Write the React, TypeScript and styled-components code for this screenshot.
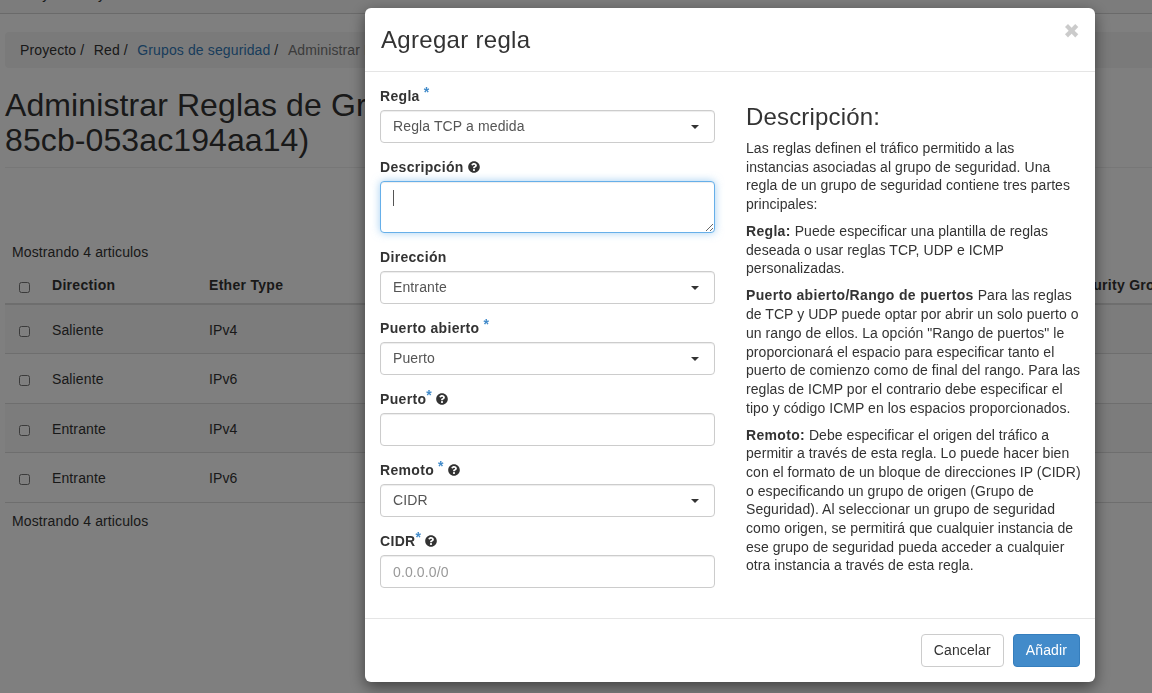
import * as React from 'react';
import styled, {createGlobalStyle} from 'styled-components';
import {FaQuestionCircle} from 'react-icons/fa';

const GlobalStyle = createGlobalStyle`
  html, body {
    margin: 0;
    height: 100%;
    overflow: hidden;
    background: #fff;
    color: #333;
    font-family: "Liberation Sans", Arial, sans-serif;
    font-size: 14px;
    line-height: 20px;
    letter-spacing: .12px;
  }
  * { box-sizing: border-box; }
  strong { letter-spacing: .32px; }
`

const Nav = styled.nav`
  display: flex;
  gap: 10px;
  height: 14px;
  padding-left: 20px;
  overflow: hidden;
  background: #f8f8f8;
  border-bottom: 1px solid #d5d5d5;
`
const NavItem = styled.span`
  margin-top: -16px;
  white-space: nowrap;
`
const Page = styled.main`
  width: 1300px;
  padding: 18px 5px 0;
`
const Breadcrumb = styled.ol`
  display: flex;
  margin: 0;
  padding: 8px 15px;
  list-style: none;
  background: #f5f5f5;
  border-radius: 4px;
`
const Crumb = styled.li<{$active?: boolean}>`
  margin-right: 9.5px;
  color: ${p => (p.$active ? '#777' : '#333')};
  white-space: nowrap;
  &::after {
    content: ${p => (p.$active ? 'none' : '" /"')};
  }
  a {
    color: #337ab7;
    text-decoration: none;
  }
`
const Title = styled.h1`
  margin: 20px 0 0;
  padding-bottom: 8.6px;
  border-bottom: 1px solid #eee;
  font-size: 32px;
  font-weight: 400;
  line-height: 35.2px;
  letter-spacing: .1px;
`
const Count = styled.div<{$top: number}>`
  margin-top: ${p => p.$top}px;
  padding-left: 7px;
`
const Table = styled.table`
  width: 1290px;
  margin-top: 6px;
  table-layout: fixed;
  border-collapse: collapse;
`
const Col = styled.col<{$width: number}>`
  width: ${p => p.$width}px;
`
const HeadCell = styled.th`
  height: 36px;
  padding: 0 8px 2px;
  border-bottom: 2px solid #ddd;
  font-weight: 700;
  letter-spacing: .3px;
  text-align: left;
  white-space: nowrap;
`
const Row = styled.tr`
  height: 49.5px;
  border-bottom: 1px solid #ddd;
  &:nth-child(odd) {
    background: #f9f9f9;
  }
`
const Cell = styled.td`
  padding: 2px 8px 0;
`
const RowCheck = styled.input`
  display: block;
  width: 11px;
  height: 11px;
  margin: 3px 0 0 6px;
`
const HeadCheck = styled(RowCheck)`
  margin-top: 6px;
`

const Overlay = styled.div`
  position: fixed;
  inset: 0;
  display: flex;
  align-items: flex-start;
  padding: 8px 0 0 365px;
  background: rgba(0, 0, 0, .5);
`
const Modal = styled.section`
  width: 730px;
  background: #fff;
  border-radius: 6px;
  box-shadow: 0 5px 15px rgba(0, 0, 0, .5);
`
const ModalHeader = styled.header`
  display: flex;
  justify-content: space-between;
  padding: 15px 15px 15px 16px;
  border-bottom: 1px solid #e5e5e5;
`
const ModalTitle = styled.h4`
  margin: 0;
  font-size: 24px;
  font-weight: 400;
  line-height: 33px;
  letter-spacing: .3px;
`
const Close = styled.button`
  align-self: flex-start;
  height: 18px;
  margin-top: -1px;
  padding: 0;
  background: none;
  border: 0;
  color: #000;
  font-family: "DejaVu Sans", sans-serif;
  font-size: 20px;
  line-height: 18px;
  opacity: .2;
`
const ModalBody = styled.div`
  display: grid;
  grid-template-columns: 335px 334px;
  column-gap: 31px;
  padding: 15px 15px 15px;
`
const Field = styled.div`
  margin-bottom: 15px;
`
const Label = styled.label`
  display: flex;
  align-items: center;
  height: 20px;
  margin-bottom: 3px;
  padding-bottom: 2px;
  font-weight: 700;
  letter-spacing: .32px;
`
const Required = styled.span<{$gap: number}>`
  align-self: flex-start;
  margin: -2px 0 0 ${p => p.$gap}px;
  color: #428bca;
  font-size: 14px;
  line-height: 14px;
`
const HelpIcon = styled(FaQuestionCircle)`
  width: 12px;
  height: 12px;
  margin-left: 4px;
  color: #333;
`
const controlStyles = `
  display: block;
  width: 100%;
  padding: 6px 12px;
  background: #fff;
  border: 1px solid #ccc;
  border-radius: 4px;
  box-shadow: inset 0 1px 1px rgba(0, 0, 0, .075);
  color: #555;
  font-family: inherit;
  font-size: 14px;
  line-height: 20px;
  letter-spacing: .12px;
  outline: none;
`
const SelectWrap = styled.div`
  position: relative;
  &::after {
    content: "";
    position: absolute;
    top: 15px;
    right: 16px;
    border-top: 4px solid #333;
    border-left: 4px solid transparent;
    border-right: 4px solid transparent;
    pointer-events: none;
  }
`
const Select = styled.select`
  ${controlStyles}
  height: 33px;
  padding-top: 5px;
  padding-bottom: 7px;
  appearance: none;
`
const Input = styled.input`
  ${controlStyles}
  height: 33px;
  &::placeholder {
    color: #999;
    opacity: 1;
  }
`
const TextWrap = styled.div`
  position: relative;
  &::before {
    content: "";
    position: absolute;
    top: 9px;
    left: 13px;
    width: 1px;
    height: 16px;
    background: #555;
  }
`
const TextArea = styled.textarea`
  ${controlStyles}
  height: 52px;
  resize: vertical;
  border-color: #66afe9;
  box-shadow: inset 0 1px 1px rgba(0, 0, 0, .075), 0 0 8px rgba(102, 175, 233, .6);
`
const Help = styled.aside`
  padding-top: 17px;
`
const HelpTitle = styled.h3`
  margin: 0 0 9px;
  font-size: 24px;
  font-weight: 400;
  line-height: 26px;
  letter-spacing: .17px;
`
const HelpText = styled.p`
  margin: 0 0 8.4px;
  line-height: 18.67px;
  letter-spacing: .05px;
  white-space: nowrap;
`
const ModalFooter = styled.footer`
  display: flex;
  justify-content: flex-end;
  gap: 9px;
  padding: 15px;
  border-top: 1px solid #e5e5e5;
`
const Button = styled.button<{$primary?: boolean}>`
  height: 33px;
  padding: 0 12px 2px;
  background: ${p => (p.$primary ? '#428bca' : '#fff')};
  border: 1px solid ${p => (p.$primary ? '#357ebd' : '#ccc')};
  border-radius: 4px;
  color: ${p => (p.$primary ? '#fff' : '#333')};
  font-family: inherit;
  font-size: 14px;
  letter-spacing: .12px;
`

const columns = [39, 157, 160, 200, 200, 241, 293]
const rules = [
  ['Saliente', 'IPv4', '0.0.0.0/0'],
  ['Saliente', 'IPv6', '::/0'],
  ['Entrante', 'IPv4', '-'],
  ['Entrante', 'IPv6', '-'],
]

function SelectField(props: {value: string}) {
  return (
    <SelectWrap>
      <Select defaultValue={props.value}>
        <option>{props.value}</option>
      </Select>
    </SelectWrap>
  )
}

export default function App() {
  return (
    <>
      <GlobalStyle/>
      <Nav>
        <NavItem>Proyecto</NavItem>
        <NavItem>My cloud</NavItem>
      </Nav>
      <Page>
        <Breadcrumb>
          <Crumb>Proyecto</Crumb>
          <Crumb>Red</Crumb>
          <Crumb><a href="#grupos">Grupos de seguridad</a></Crumb>
          <Crumb $active>Administrar Reglas de Grupo de Seguridad</Crumb>
        </Breadcrumb>
        <Title>
          Administrar Reglas de Grupo de Seguridad: default (4e1d<br/>
          85cb-053ac194aa14)
        </Title>
        <Count $top={74}>Mostrando 4 articulos</Count>
        <Table>
          <colgroup>
            {columns.map((w, i) => <Col key={i} $width={w}/>)}
          </colgroup>
          <thead>
            <tr>
              <HeadCell><HeadCheck type="checkbox"/></HeadCell>
              <HeadCell>Direction</HeadCell>
              <HeadCell>Ether Type</HeadCell>
              <HeadCell>IP Protocol</HeadCell>
              <HeadCell>Port Range</HeadCell>
              <HeadCell>Remote IP Prefix</HeadCell>
              <HeadCell>Remote Security Group</HeadCell>
            </tr>
          </thead>
          <tbody>
            {rules.map(([direction, ether, prefix], i) =>
              <Row key={i}>
                <Cell><RowCheck type="checkbox"/></Cell>
                <Cell>{direction}</Cell>
                <Cell>{ether}</Cell>
                <Cell>Cualquiera</Cell>
                <Cell>Cualquiera</Cell>
                <Cell>{prefix}</Cell>
                <Cell/>
              </Row>
            )}
          </tbody>
        </Table>
        <Count $top={8}>Mostrando 4 articulos</Count>
      </Page>
      <Overlay>
        <Modal>
          <ModalHeader>
            <ModalTitle>Agregar regla</ModalTitle>
            <Close>✖</Close>
          </ModalHeader>
          <ModalBody>
            <form>
              <Field>
                <Label>Regla<Required $gap={4}>*</Required></Label>
                <SelectField value="Regla TCP a medida"/>
              </Field>
              <Field>
                <Label>Descripción<HelpIcon/></Label>
                <TextWrap><TextArea/></TextWrap>
              </Field>
              <Field>
                <Label>Dirección</Label>
                <SelectField value="Entrante"/>
              </Field>
              <Field>
                <Label>Puerto abierto<Required $gap={4}>*</Required></Label>
                <SelectField value="Puerto"/>
              </Field>
              <Field>
                <Label>Puerto<Required $gap={0}>*</Required><HelpIcon/></Label>
                <Input type="text"/>
              </Field>
              <Field>
                <Label>Remoto<Required $gap={4}>*</Required><HelpIcon/></Label>
                <SelectField value="CIDR"/>
              </Field>
              <Field>
                <Label>CIDR<Required $gap={0}>*</Required><HelpIcon/></Label>
                <Input type="text" placeholder="0.0.0.0/0"/>
              </Field>
            </form>
            <Help>
              <HelpTitle>Descripción:</HelpTitle>
              <HelpText>
                Las reglas definen el tráfico permitido a las<br/>
                instancias asociadas al grupo de seguridad. Una<br/>
                regla de un grupo de seguridad contiene tres partes<br/>
                principales:
              </HelpText>
              <HelpText>
                <strong>Regla:</strong> Puede especificar una plantilla de reglas<br/>
                deseada o usar reglas TCP, UDP e ICMP<br/>
                personalizadas.
              </HelpText>
              <HelpText>
                <strong>Puerto abierto/Rango de puertos</strong> Para las reglas<br/>
                de TCP y UDP puede optar por abrir un solo puerto o<br/>
                un rango de ellos. La opción "Rango de puertos" le<br/>
                proporcionará el espacio para especificar tanto el<br/>
                puerto de comienzo como de final del rango. Para las<br/>
                reglas de ICMP por el contrario debe especificar el<br/>
                tipo y código ICMP en los espacios proporcionados.
              </HelpText>
              <HelpText>
                <strong>Remoto:</strong> Debe especificar el origen del tráfico a<br/>
                permitir a través de esta regla. Lo puede hacer bien<br/>
                con el formato de un bloque de direcciones IP (CIDR)<br/>
                o especificando un grupo de origen (Grupo de<br/>
                Seguridad). Al seleccionar un grupo de seguridad<br/>
                como origen, se permitirá que cualquier instancia de<br/>
                ese grupo de seguridad pueda acceder a cualquier<br/>
                otra instancia a través de esta regla.
              </HelpText>
            </Help>
          </ModalBody>
          <ModalFooter>
            <Button>Cancelar</Button>
            <Button $primary>Añadir</Button>
          </ModalFooter>
        </Modal>
      </Overlay>
    </>
  )
}
